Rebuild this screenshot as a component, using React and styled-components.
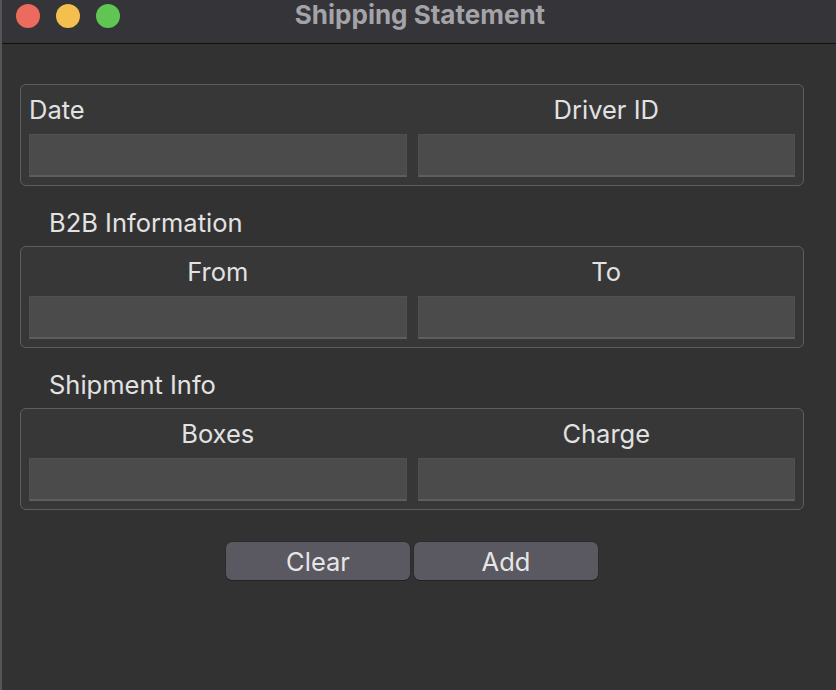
import React from 'react';
import styled, { createGlobalStyle } from 'styled-components';

const GlobalStyle = createGlobalStyle`
  html, body {
    margin: 0;
    padding: 0;
    background: #323232;
  }
  body {
    font-family: Inter, "Noto Sans", "Liberation Sans", sans-serif;
  }
`;

const Window = styled.div`
  width: 836px;
  height: 690px;
  box-sizing: border-box;
  background: #323232;
  border-left: 2px solid #555555;
  display: flex;
  flex-direction: column;
  overflow: hidden;
`;

const TitleBar = styled.div`
  position: relative;
  height: 43px;
  flex-shrink: 0;
  background: #353439;
  border-bottom: 1px solid #111111;
  display: flex;
  align-items: center;
  justify-content: center;
`;

const Lights = styled.div`
  position: absolute;
  left: 14px;
  top: 4px;
  display: flex;
  gap: 16px;
`;

const Light = styled.span`
  width: 24px;
  height: 24px;
  border-radius: 50%;
  background: ${(p) => p.color};
`;

const Title = styled.div`
  font-size: 26px;
  font-weight: 700;
  color: #a4a3a8;
  margin-top: -14px;
  margin-left: 2px;
`;

const Content = styled.div`
  padding: 40px 32px 0 18px;
  display: flex;
  flex-direction: column;
`;

const SectionTitle = styled.div`
  padding: 22px 0 0 29px;
  margin-bottom: 8px;
  height: 30px;
  line-height: 30px;
  font-size: 25.5px;
  color: #e2e2e2;
`;

const Group = styled.div`
  border: 1px solid #5e5e5e;
  border-radius: 6px;
  background: #373737;
  padding: 0 8px 8px;
  display: grid;
  grid-template-columns: 1fr 1fr;
  column-gap: 11px;
`;

const Label = styled.div`
  height: 49px;
  line-height: 49px;
  font-size: 25.5px;
  color: #e2e2e2;
  text-align: ${(p) => (p.$left ? 'left' : 'center')};
`;

const Input = styled.input`
  height: 43px;
  box-sizing: border-box;
  background: #4b4b4b;
  border: 1px solid #505050;
  border-bottom: 2px solid #5e5e5e;
  outline: none;
  color: #e2e2e2;
  font-size: 22px;
  font-family: inherit;
  padding: 0 6px;
  min-width: 0;
`;

const ButtonRow = styled.div`
  margin-top: 32px;
  display: flex;
  justify-content: center;
  gap: 4px;
`;

const Button = styled.button`
  width: 184px;
  height: 38px;
  border: none;
  border-radius: 6px;
  background: #5a5860;
  box-shadow: 0 1px 0 #222222, 0 0 0 0.5px #262626;
  color: #e6e6e6;
  font-family: inherit;
  font-size: 25.5px;
  padding: 0;
  cursor: pointer;
`;

const FieldGroup = ({ labels, leftFirst }) => (
  <Group>
    <Label $left={leftFirst}>{labels[0]}</Label>
    <Label>{labels[1]}</Label>
    <Input />
    <Input />
  </Group>
);

export default function App() {
  return (
    <>
      <GlobalStyle />
      <Window>
        <TitleBar>
          <Lights>
            <Light color="#ec6a5e" />
            <Light color="#f4bf4f" />
            <Light color="#61c554" />
          </Lights>
          <Title>Shipping Statement</Title>
        </TitleBar>
        <Content>
          <FieldGroup labels={['Date', 'Driver ID']} leftFirst />
          <SectionTitle>B2B Information</SectionTitle>
          <FieldGroup labels={['From', 'To']} />
          <SectionTitle>Shipment Info</SectionTitle>
          <FieldGroup labels={['Boxes', 'Charge']} />
          <ButtonRow>
            <Button>Clear</Button>
            <Button>Add</Button>
          </ButtonRow>
        </Content>
      </Window>
    </>
  );
}
